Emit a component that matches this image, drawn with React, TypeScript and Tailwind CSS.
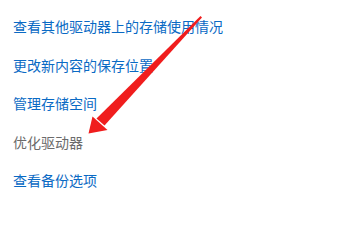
import React from "react";

const links = [
  { label: "查看其他驱动器上的存储使用情况", active: true },
  { label: "更改新内容的保存位置", active: true },
  { label: "管理存储空间", active: true },
  { label: "优化驱动器", active: false },
  { label: "查看备份选项", active: true },
];

// hand-drawn red arrow pointing at the disabled item
const Arrow = () => (
  <svg className="absolute left-0 top-0 pointer-events-none" width="350" height="220" viewBox="0 0 350 220">
    <polygon points="200.5,16 202,17.5 104.5,125.5 96.5,118.5" fill="#f01d1d" />
    <polygon points="88.5,133.5 92.5,116.5 107.5,130" fill="#f01d1d" />
  </svg>
);

export default function App() {
  return (
    <div className="relative w-[350px] h-[220px] bg-white overflow-hidden" style={{ fontFamily: '"Noto Sans CJK SC", "Noto Sans", sans-serif' }}>
      <div className="flex flex-col pl-[13px] pt-[7px]">
        {links.map((item) => (
          <a
            key={item.label}
            className={`h-[38.5px] leading-[38px] text-[14px] ${item.active ? "text-[#0a6ac4]" : "text-[#6b6b6b]"}`}
          >
            {item.label}
          </a>
        ))}
      </div>
      <Arrow />
    </div>
  );
}
